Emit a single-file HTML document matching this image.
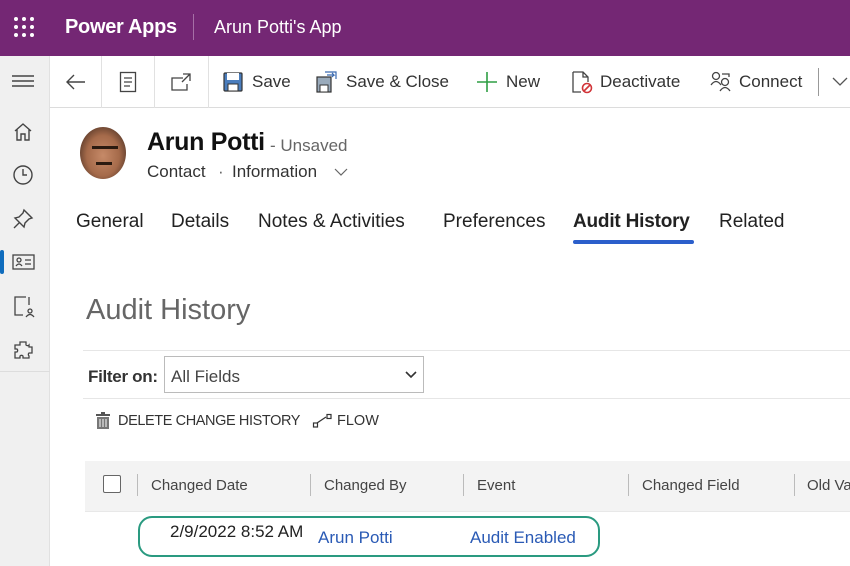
<!DOCTYPE html>
<html><head><style>
*{margin:0;padding:0;box-sizing:border-box}
body{width:850px;height:566px;overflow:hidden;background:#fff;font-family:"Liberation Sans",sans-serif;color:#222;position:relative}
.a{position:absolute;white-space:nowrap}
#hd{left:0;top:0;width:850px;height:56px;background:#742774}
#sb{left:0;top:56px;width:50px;height:510px;background:#f0f0f0;border-right:1px solid #e1e1e1}
#tb{left:50px;top:56px;width:800px;height:52px;border-bottom:1px solid #dcdcdc;background:#fff}
.vs{position:absolute;top:0;width:1px;height:52px;background:#e1e1e1}
.t17{font-size:17px;color:#333}
.tab{font-size:19px;color:#222;top:211px}
.th{font-size:15px;color:#444;top:477px}
.cs{position:absolute;top:474px;width:1px;height:22px;background:#bbb}
</style></head><body>
<div id="hd" class="a"></div>
<svg class="a" style="left:13px;top:16px" width="22" height="22"><g fill="#fff"><circle cx="3" cy="3" r="2"/><circle cx="11" cy="3" r="2"/><circle cx="19" cy="3" r="2"/><circle cx="3" cy="11" r="2"/><circle cx="11" cy="11" r="2"/><circle cx="19" cy="11" r="2"/><circle cx="3" cy="19" r="2"/><circle cx="11" cy="19" r="2"/><circle cx="19" cy="19" r="2"/></g></svg>
<div class="a" style="left:65px;top:16px;font-size:20px;font-weight:bold;color:#fff;letter-spacing:-0.3px">Power Apps</div>
<div class="a" style="left:193px;top:14px;width:1px;height:26px;background:#a66fa6"></div>
<div class="a" style="left:214px;top:17px;font-size:18px;color:#fff">Arun Potti's App</div>

<div id="sb" class="a"></div>
<svg class="a" style="left:12px;top:74px" width="22" height="14"><g stroke="#444" stroke-width="1.4"><line x1="0" y1="2" x2="22" y2="2"/><line x1="0" y1="7" x2="22" y2="7"/><line x1="0" y1="12" x2="22" y2="12"/></g></svg>
<svg class="a" style="left:12px;top:121px" width="22" height="22" fill="none" stroke="#444" stroke-width="1.4"><path d="M3 10L11 3L19 10M5 8V19H9V13H13V19H17V8"/></svg>
<svg class="a" style="left:12px;top:164px" width="22" height="22" fill="none" stroke="#444" stroke-width="1.4"><circle cx="11" cy="11" r="9"/><path d="M11 5V11H15"/></svg>
<svg class="a" style="left:12px;top:208px" width="22" height="22" fill="none" stroke="#444" stroke-width="1.4"><path d="M12 2L20 10L17 11L13 15L12 19L3 10L7 9L11 5Z M7 15L2 20"/></svg>
<div class="a" style="left:0;top:250px;width:4px;height:24px;background:#0f6cbd;border-radius:2px"></div>
<svg class="a" style="left:12px;top:252px" width="24" height="20" fill="none" stroke="#444" stroke-width="1.3"><rect x="1" y="3" width="21" height="14"/><circle cx="7" cy="8" r="2"/><path d="M4 14Q7 10 10 14M13 8H19M13 12H19"/></svg>
<svg class="a" style="left:13px;top:295px" width="22" height="24" fill="none" stroke="#444" stroke-width="1.3"><path d="M13 2H2V20H10M16 2V10"/><circle cx="17" cy="16" r="2"/><path d="M13 22Q17 17 21 22"/></svg>
<svg class="a" style="left:12px;top:339px" width="22" height="22" fill="none" stroke="#444" stroke-width="1.3"><path d="M8 3H14V6A2 2 0 0 0 17 6V8H20V14H17A2 2 0 0 0 17 17V19H11V17A2 2 0 0 0 8 17V19H3V13H5A2 2 0 0 0 5 10H3V6H8Z"/></svg>
<div class="a" style="left:0;top:371px;width:50px;height:1px;background:#ddd"></div>

<div id="tb" class="a">
<div class="vs" style="left:51px"></div><div class="vs" style="left:104px"></div><div class="vs" style="left:158px"></div><div class="vs" style="left:768px;top:12px;height:28px;background:#999"></div>
</div>
<svg class="a" style="left:65px;top:72px" width="22" height="20" fill="none" stroke="#444" stroke-width="1.4"><path d="M20 10H2M9 3L2 10L9 17"/></svg>
<svg class="a" style="left:119px;top:71px" width="18" height="22" fill="none" stroke="#444" stroke-width="1.3"><rect x="1.5" y="1.5" width="15" height="19"/><path d="M5 7H13M5 11H13M5 15H11"/></svg>
<svg class="a" style="left:170px;top:72px" width="22" height="20" fill="none" stroke="#444" stroke-width="1.3"><path d="M13 6H2V18H17V12M13 2H20V9M20 2L12 10"/></svg>
<svg class="a" style="left:223px;top:72px" width="20" height="20"><rect x="1" y="1" width="18" height="18" rx="1" fill="#4a7dbd" stroke="#333" stroke-width="1.2"/><rect x="4" y="1" width="12" height="7" fill="#fff"/><rect x="5" y="12" width="10" height="7" fill="#fff" stroke="#333"/></svg>
<div class="a t17" style="left:252px;top:72px">Save</div>
<svg class="a" style="left:316px;top:70px" width="22" height="24"><rect x="1" y="7" width="14" height="15" fill="#9ab" stroke="#333" stroke-width="1.2"/><rect x="4" y="15" width="8" height="7" fill="#fff" stroke="#333"/><path d="M9 2H20V9M11 5H18L16 3M18 5L16 7" fill="none" stroke="#3a6ab0" stroke-width="1.2"/></svg>
<div class="a t17" style="left:346px;top:72px">Save &amp; Close</div>
<svg class="a" style="left:476px;top:71px" width="22" height="22"><path d="M11 1V21M1 11H21" stroke="#2f9e44" stroke-width="1.6"/></svg>
<div class="a t17" style="left:506px;top:72px">New</div>
<svg class="a" style="left:571px;top:70px" width="22" height="24" fill="none" stroke="#444" stroke-width="1.3"><path d="M2 2H12L17 7V12M12 2V7H17M2 2V22H10"/><circle cx="16" cy="18" r="4.5" stroke="#d13438" stroke-width="1.6"/><path d="M13 21L19 15" stroke="#d13438" stroke-width="1.6"/></svg>
<div class="a t17" style="left:600px;top:72px">Deactivate</div>
<svg class="a" style="left:710px;top:71px" width="22" height="22" fill="none" stroke="#444" stroke-width="1.3"><circle cx="6" cy="5" r="3.5"/><path d="M1 14Q6 7 11 14"/><circle cx="15" cy="11" r="3.5"/><path d="M10 20Q15 13 20 20M12 3H19V6"/></svg>
<div class="a t17" style="left:739px;top:72px">Connect</div>
<svg class="a" style="left:832px;top:76px" width="18" height="12" fill="none" stroke="#555" stroke-width="1.3"><path d="M1 2L8 9L15 2"/></svg>

<div class="a" style="left:80px;top:127px;width:46px;height:52px;border-radius:50%;background:radial-gradient(ellipse at 50% 55%,#c68a68 0%,#a56a4a 50%,#5a3a2a 80%,#fff 82%)"></div>
<div class="a" style="left:92px;top:146px;width:26px;height:3px;background:#2a1a10"></div>
<div class="a" style="left:96px;top:162px;width:16px;height:3px;background:#2a1a10"></div>
<div class="a" style="left:147px;top:128px;font-size:25px;font-weight:bold;color:#111;letter-spacing:-0.3px">Arun Potti</div>
<div class="a" style="left:270px;top:136px;font-size:17px;color:#666">- Unsaved</div>
<div class="a" style="left:147px;top:162px;font-size:17px;color:#333">Contact</div>
<div class="a" style="left:218px;top:162px;font-size:17px;color:#666">·</div>
<div class="a" style="left:232px;top:162px;font-size:17px;color:#333">Information</div>
<svg class="a" style="left:334px;top:168px" width="14" height="9" fill="none" stroke="#666" stroke-width="1.2"><path d="M1 1L7 7L13 1"/></svg>

<div class="a tab" style="left:76px">General</div>
<div class="a tab" style="left:171px">Details</div>
<div class="a tab" style="left:258px">Notes &amp; Activities</div>
<div class="a tab" style="left:443px">Preferences</div>
<div class="a tab" style="left:573px;font-weight:bold;letter-spacing:-0.2px">Audit History</div>
<div class="a" style="left:573px;top:240px;width:121px;height:4px;background:#2b5fcb;border-radius:2px"></div>
<div class="a tab" style="left:719px">Related</div>

<div class="a" style="left:86px;top:294px;font-size:29px;color:#666">Audit History</div>
<div class="a" style="left:83px;top:350px;width:767px;height:1px;background:#e6e6e6"></div>
<div class="a" style="left:88px;top:367px;font-size:17px;color:#333;font-weight:bold;letter-spacing:-0.3px">Filter on:</div>
<div class="a" style="left:164px;top:356px;width:260px;height:37px;border:1px solid #bbb"></div>
<div class="a" style="left:171px;top:367px;font-size:17px;color:#444">All Fields</div>
<svg class="a" style="left:405px;top:371px" width="12" height="8" fill="none" stroke="#333" stroke-width="1.6"><path d="M1 1L6 6L11 1"/></svg>
<div class="a" style="left:83px;top:398px;width:767px;height:1px;background:#e6e6e6"></div>
<svg class="a" style="left:95px;top:412px" width="16" height="18"><rect x="1" y="2" width="14" height="2" fill="#555"/><rect x="6" y="0" width="4" height="2" fill="#555"/><rect x="2" y="5" width="12" height="12" fill="#777"/><path d="M5 7V15M8 7V15M11 7V15" stroke="#fff" stroke-width="1"/></svg>
<div class="a" style="left:118px;top:413px;font-size:14.5px;color:#333;letter-spacing:-0.4px">DELETE CHANGE HISTORY</div>
<svg class="a" style="left:312px;top:413px" width="22" height="16" fill="none" stroke="#333" stroke-width="1.2"><rect x="1.5" y="10" width="4" height="4"/><rect x="15" y="1.5" width="4" height="4"/><path d="M5 10L14 4"/></svg>
<div class="a" style="left:337px;top:413px;font-size:14.5px;color:#333">FLOW</div>

<div class="a" style="left:85px;top:461px;width:765px;height:50px;background:#f3f3f3"></div>
<div class="a" style="left:103px;top:475px;width:18px;height:18px;border:1.5px solid #666;border-radius:2px;background:#fff"></div>
<div class="cs" style="left:137px"></div><div class="cs" style="left:310px"></div><div class="cs" style="left:463px"></div><div class="cs" style="left:628px"></div><div class="cs" style="left:794px"></div>
<div class="a th" style="left:151px">Changed Date</div>
<div class="a th" style="left:324px">Changed By</div>
<div class="a th" style="left:477px">Event</div>
<div class="a th" style="left:642px">Changed Field</div>
<div class="a th" style="left:807px">Old Va</div>
<div class="a" style="left:85px;top:511px;width:765px;height:1px;background:#e8e8e8"></div>
<div class="a" style="left:138px;top:516px;width:462px;height:41px;border:2.5px solid #2a9a80;border-radius:14px"></div>
<div class="a" style="left:170px;top:522px;font-size:17px;color:#222">2/9/2022 8:52 AM</div>
<div class="a" style="left:318px;top:528px;font-size:17px;color:#2a5ab5">Arun Potti</div>
<div class="a" style="left:470px;top:528px;font-size:17px;color:#2a5ab5">Audit Enabled</div>
</body></html>
